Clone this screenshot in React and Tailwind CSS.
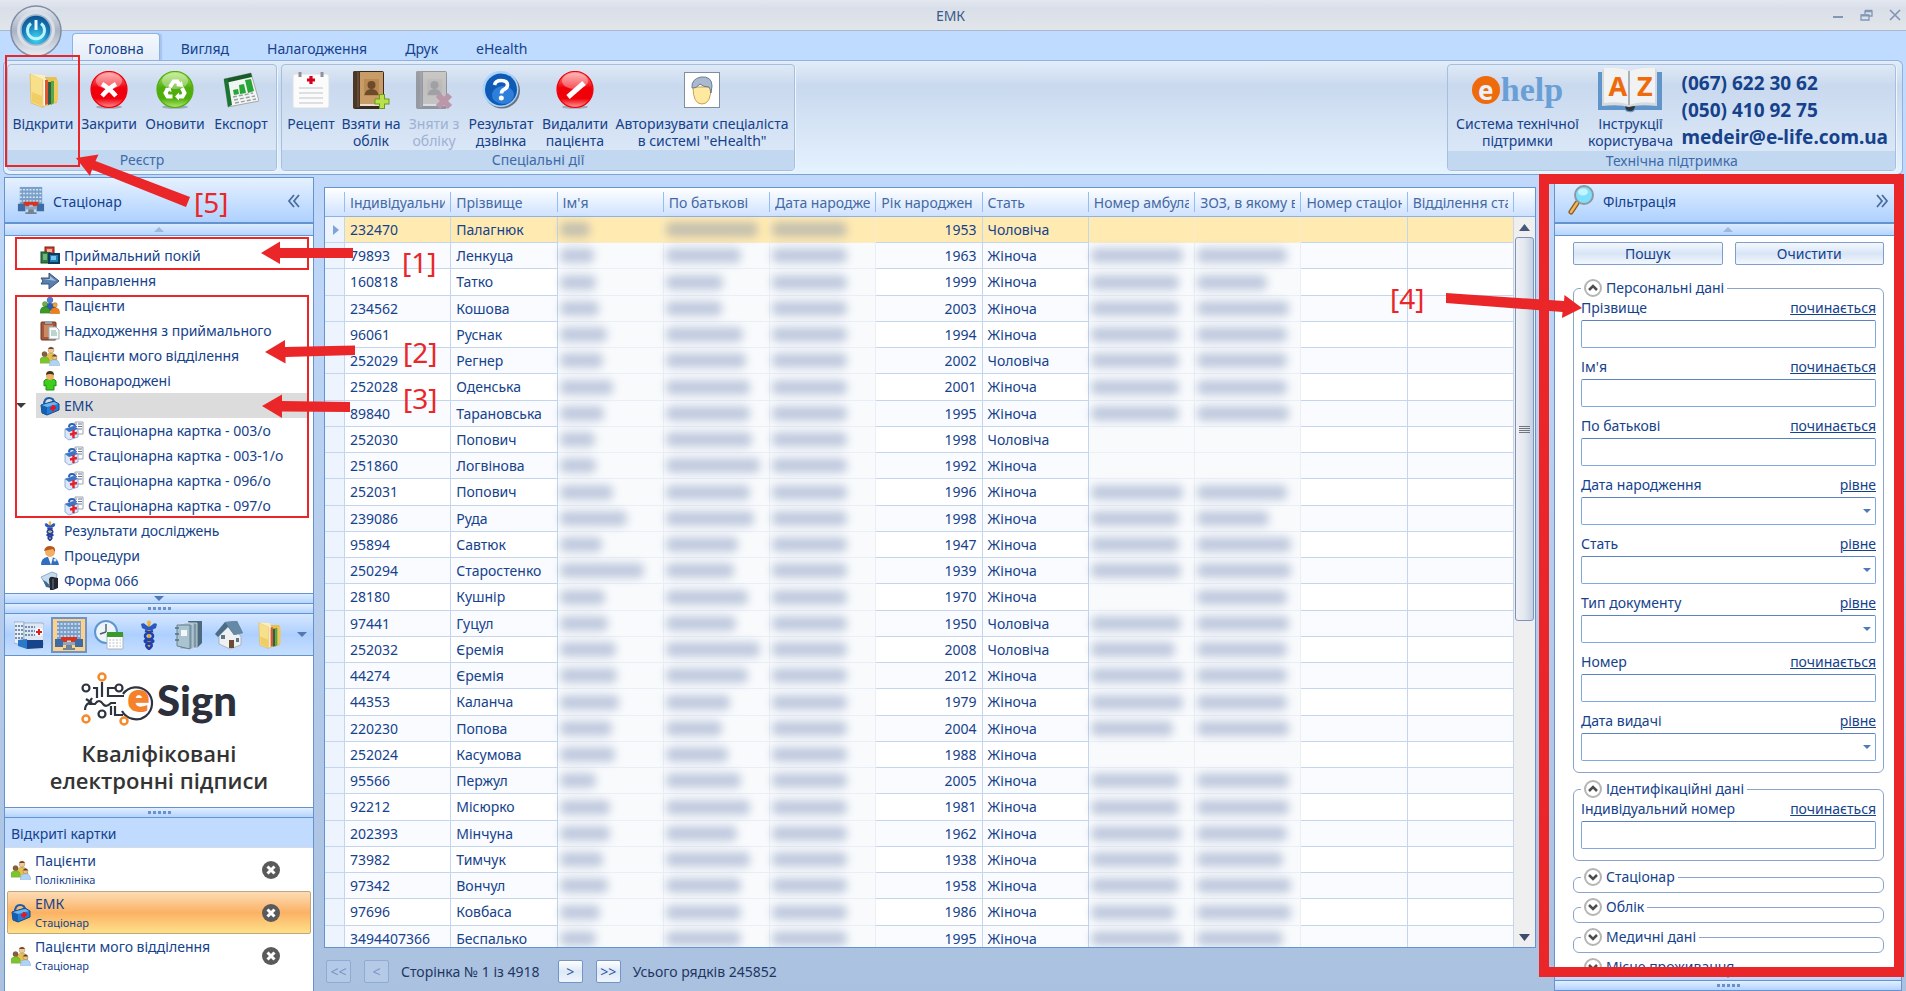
import { useState } from 'react'

/* ---------- icons ---------- */

function FolderIcon({ size }) {
  return (
    <svg width={size} height={size} viewBox="0 0 36 36" aria-hidden="true">
      <path d="M17 5 h13 q2 0 2 2 v24 l-15 4z" fill="#e9c04f" />
      <path d="M17 6 h4 v27 l-4 2z" fill="#fff" stroke="#aaa" strokeWidth="0.5" />
      <path d="M20 8 h3 v24 l-3 1z" fill="#e0562c" />
      <path d="M23 10 h3 v22 l-3 1z" fill="#2f5d45" />
      <path d="M26 9 h3 v22 l-3 2z" fill="#57a745" />
      <path d="M5 2 L18 7 L18 35.500 L6 31 Z" fill="#f8e08a" stroke="#d9b14a" strokeWidth="0.6" />
      <path d="M5 2 L20 3 L20 10 L17 7z" fill="#fbeeb8" />
      <path d="M7 20 L17 24 V34 L7 30z" fill="#edbf4f" opacity="0.6" />
      <path d="M29 8 h3 q1 0 1 2 v18 l-4 3z" fill="#edc95f" />
    </svg>
  )
}

function GlossCircle({ id, from, to, children }) {
  return (
    <svg width="38" height="38" viewBox="0 0 38 38" aria-hidden="true">
      <defs>
        <linearGradient id={id} x1="0" y1="0" x2="0" y2="1">
          <stop offset="0" stopColor={from} />
          <stop offset="0.45" stopColor={to} />
          <stop offset="0.75" stopColor={to} />
          <stop offset="1" stopColor={from} />
        </linearGradient>
      </defs>
      <ellipse cx="19" cy="36" rx="13" ry="1.8" fill="#7d8795" opacity="0.6" />
      <circle cx="19" cy="18.500" r="18" fill={`url(#${id})`} stroke={to} strokeWidth="1.2" />
      <ellipse cx="19" cy="10" rx="13" ry="8" fill="#fff" opacity="0.35" />
      {children}
    </svg>
  )
}

function CloseIcon() {
  return (
    <GlossCircle id="gRed" from="#ff8f8f" to="#f0000d">
      <path d="M12 13 q7 4 14 12 M26 13 q-7 4 -14 12" stroke="#fff" strokeWidth="4.500" fill="none" />
    </GlossCircle>
  )
}

function RefreshIcon() {
  return (
    <GlossCircle id="gGreen" from="#b5e86f" to="#4fae0c">
      <g fill="none" stroke="#fff" strokeWidth="4">
        <path d="M14 16 l3.500 -5.500 h4 l2 4" />
        <path d="M26 17 l2.500 5 l-2 3.500 h-5" />
        <path d="M16.500 25.500 h-5 l-2 -3.500 l2.500 -4.500" />
      </g>
      <path d="M20 15 l7 1 l-1 -6z M23 21.500 l-4 4 l4 4z M8.500 18 l6 -2 l1 5z" fill="#fff" />
    </GlossCircle>
  )
}

function NoEntryIcon() {
  return (
    <GlossCircle id="gRed2" from="#ff9c9c" to="#f00008">
      <path d="M12 26 L28 12" stroke="#fff" strokeWidth="5" />
    </GlossCircle>
  )
}

function HelpIcon() {
  return (
    <svg width="40" height="38" viewBox="0 0 40 38" aria-hidden="true">
      <circle cx="21" cy="19.500" r="18" fill="#6b7480" />
      <circle cx="19.500" cy="18" r="18" fill="#a9d4fb" />
      <circle cx="20" cy="18.500" r="16" fill="#0f5ab5" />
      <ellipse cx="22" cy="24" rx="11" ry="9" fill="#3c8ee8" opacity="0.7" />
      <path d="M13.500 14 q1 -4.500 6.500 -4.500 q6.500 0 6.500 4.500 q0 3 -3.500 4.500 q-2.500 1 -2.500 4" fill="none" stroke="#fff" strokeWidth="3.600" />
      <circle cx="20.300" cy="27" r="2.500" fill="#fff" />
    </svg>
  )
}

function ExportIcon() {
  return (
    <svg width="36" height="36" viewBox="0 0 36 36" aria-hidden="true">
      <path d="M1 7 L28 1 L36 29 L5 35 Z" fill="#f3f5f4" stroke="#a4aaa8" />
      <path d="M1 7 L28 1 L29 5 L2 11 Z" fill="#155c26" />
      <path d="M1 8 L5 7 L9 33 L5 35 Z" fill="#1b7431" />
      <path d="M10 18 l5 -1 l1 5 l-5 1z M16 13 l5 -1 l2 9 l-6 1z M22 8 l6 -1 l3 12 l-6 2z" fill="#27a636" />
      <path d="M10 25 l20 -4 M11 28 l21 -4 M12 31 l21 -4" stroke="#9aa1a0" strokeWidth="1.500" strokeDasharray="4 2" />
    </svg>
  )
}

function RecipeIcon() {
  return (
    <svg width="38" height="38" viewBox="0 0 38 38" aria-hidden="true">
      <rect x="1" y="3" width="36" height="34" rx="2" fill="#fbfbfc" stroke="#dcdfe4" />
      <path d="M8 1 v5 M30 1 v5" stroke="#8c919a" strokeWidth="3" />
      <path d="M19 5 v8 M15 9 h8" stroke="#d8001d" strokeWidth="3.200" />
      <path d="M7 17 h24 M7 22 h24 M7 27 h24 M7 32 h24" stroke="#d3d6dc" strokeWidth="1.500" />
    </svg>
  )
}

function BookIcon({ removed }) {
  return (
    <svg width="38" height="40" viewBox="0 0 38 40" aria-hidden="true" className={removed ? 'opacity-40 grayscale-[40%]' : ''}>
      <rect x="1" y="1" width="31" height="38" rx="2" fill="#3b2a20" />
      <path d="M8 36 h24 v-2 h-24z" fill="#e8e0cf" />
      <rect x="8" y="2" width="23" height="32" fill="#c79c66" />
      <rect x="1" y="1" width="7" height="37" rx="2" fill="#4d3727" />
      <path d="M6 2 v35" stroke="#7c6148" />
      <rect x="12" y="9" width="15" height="17" fill="#b98a53" />
      <circle cx="19.500" cy="15" r="4" fill="#6d4a2a" />
      <path d="M12.500 25 q1 -6 7 -6 q6 0 7 6z" fill="#6d4a2a" />
      {removed ? (
        <path d="M23 25 l12 12 M35 25 l-12 12" stroke="#d8213a" strokeWidth="6" />
      ) : (
        <g>
          <path d="M30 24 v15 M22.500 31.500 h15" stroke="#6d9a18" strokeWidth="6" />
          <path d="M30 25 v13 M23.500 31.500 h13" stroke="#b8e14c" strokeWidth="4" />
        </g>
      )}
    </svg>
  )
}

function DoctorCardIcon() {
  return (
    <svg width="36" height="36" viewBox="0 0 36 36" aria-hidden="true">
      <rect x="0.500" y="0.500" width="35" height="35" fill="#fff" stroke="#7e8ea3" />
      <path d="M9 15 q0 17 9 17 q9 0 9 -17z" fill="#ffe9a0" stroke="#caa14c" />
      <path d="M8 16 q-1 -9 9 -11 q11 -1 11 9 l-1 7 q-1 -5 -2 -6 q-6 0 -9 -3 q-4 5 -8 4z" fill="#a9b9cf" stroke="#6c7d96" />
    </svg>
  )
}

function BookAZIcon() {
  return (
    <svg width="66" height="46" viewBox="0 0 66 46" aria-hidden="true">
      <path d="M1 5 h64 v38 h-27 q-2 3 -6 2 q-3 0 -4 -2 h-27z" fill="#5f95cb" />
      <path d="M28 38 h10 q0 6 -5 6 q-5 0 -5 -6z" fill="#31363c" />
      <path d="M5 4 q0 -2 4 -3 q16 -1 23 4 q8 -6 24 -4 q4 1 4 3 v35 q-18 -2 -28 1 q-10 -3 -27 -1z" fill="#d5dadd" />
      <path d="M7 1 q16 -1 25 3 v34 q-9 -4 -25 -2z M58 1 q-16 -1 -25 3 v34 q9 -4 25 -2z" fill="#f0f2f4" />
      <path d="M32 4 v34" stroke="#a9b2b9" strokeWidth="2" />
    </svg>
  )
}

function HospitalIcon({ size }) {
  return (
    <svg width={size} height={size} viewBox="0 0 30 30" aria-hidden="true">
      <rect x="3" y="1" width="24" height="20" fill="#7aa0c9" />
      <path d="M3 4 h24 M3 8 h24 M3 12 h24 M3 16 h24" stroke="#dbe8f5" strokeWidth="1.500" strokeDasharray="2 1.500" />
      <path d="M1 19 h8 v8 h-8z M21 19 h8 v8 h-8z" fill="#3c6ca3" />
      <path d="M7 17 h16 v3 h-2 v2 h-4 v-2 h-4 v2 h-4 v-2 h-2z" fill="#d9331f" />
      <path d="M9 22 h12 v3 h-12z" fill="#8ea6bd" />
      <path d="M12 25 h6 v3 h3 v2 h-12 v-2 h3z" fill="#75828f" />
    </svg>
  )
}

function ClinicIcon() {
  return (
    <svg width="30" height="30" viewBox="0 0 30 30" aria-hidden="true">
      <path d="M0 2 h10 v24 l-10 -3z" fill="#e8eef5" stroke="#7b93b0" strokeWidth="0.600" />
      <path d="M10 3 h18 q2 0 2 2 v19 h-20z" fill="#dfe8f2" stroke="#7b93b0" strokeWidth="0.600" />
      <path d="M1 6 h8 M1 10 h8 M1 14 h8 M1 18 h8 M11 7 h10 M11 11 h10 M11 15 h10" stroke="#51729b" strokeWidth="1.600" strokeDasharray="2 1" />
      <circle cx="25" cy="12" r="4" fill="#fff" />
      <path d="M25 9 v6 M22 12 h6" stroke="#e02020" strokeWidth="2" />
      <path d="M13 20 h16 v8 l-16 1z" fill="#17448a" />
      <path d="M4 20 l9 -1 v10 l-9 -3z" fill="#2a78c8" />
    </svg>
  )
}

function ScheduleIcon() {
  return (
    <svg width="30" height="30" viewBox="0 0 30 30" aria-hidden="true">
      <circle cx="12" cy="12" r="11" fill="#eef4fa" stroke="#5b98cf" strokeWidth="2" />
      <path d="M12 12 V4 M12 12 L6 14" stroke="#4a5d70" strokeWidth="1.400" />
      <rect x="13" y="13" width="16" height="16" rx="1" fill="#fff" stroke="#a9b4bd" />
      <rect x="13" y="12" width="16" height="5" fill="#3a9a2b" />
      <path d="M15 20 h12 M15 23 h12 M15 26 h12" stroke="#b4bcc4" strokeDasharray="2 1.500" />
    </svg>
  )
}

function CaduceusIcon({ size }) {
  return (
    <svg width={size} height={size} viewBox="0 0 30 30" aria-hidden="true">
      <path d="M15 2 V29" stroke="#e4a523" strokeWidth="2.500" />
      <circle cx="15" cy="2.500" r="2" fill="#f1b52d" />
      <path d="M7 4 q3 -2 5 1 l3 2 l3 -2 q2 -3 5 -1 l-1 4 l-4 2 h-6 l-4 -2z" fill="#2b57c0" />
      <path d="M11 11 q8 2 8 5 t-6 4 t4 4 q2 2 -2 5 M19 11 q-8 2 -8 5 t6 4 t-4 4 q-2 2 2 5" stroke="#2140a8" strokeWidth="2.600" fill="none" />
    </svg>
  )
}

function BindersIcon() {
  return (
    <svg width="30" height="30" viewBox="0 0 30 30" aria-hidden="true">
      <path d="M14 1 h14 v22 l-5 5z" fill="#4c6a7d" />
      <path d="M10 3 h13 v25 h-13z" fill="#7c98a8" stroke="#dbe6ec" strokeWidth="0.800" />
      <path d="M6 4 h13 v25 h-13z" fill="#8faab9" stroke="#dbe6ec" strokeWidth="0.800" />
      <path d="M3 5 h13 v24 l-13 -3z" fill="#a9c3d1" stroke="#54717f" strokeWidth="0.800" />
      <path d="M7 10 h6 v6 h-6z" fill="#f3f7fa" />
      <path d="M1 8 h4 M1 14 h4 M1 20 h4" stroke="#5c6e78" strokeWidth="1.500" />
    </svg>
  )
}

function HouseIcon() {
  return (
    <svg width="30" height="30" viewBox="0 0 30 30" aria-hidden="true">
      <path d="M5 14 L12 5 L27 16 V25 L16 29 L5 24z" fill="#eef0f2" stroke="#9aa2aa" strokeWidth="0.700" />
      <path d="M1 14 L11 2 L23 1 L29 13 L20 15 L14 7 L4 17z" fill="#4b6c86" />
      <path d="M11 2 L23 1 L29 13 L20 15z" fill="#648aa7" />
      <path d="M15 20 h5 v8 l-5 0z" fill="#6b4a36" />
      <path d="M7 15 h4 v4 h-4z M22 18 h3 v4 h-3z" fill="#5f7485" />
    </svg>
  )
}

function CubesIcon() {
  return (
    <svg width="20" height="20" viewBox="0 0 20 20" aria-hidden="true">
      <rect x="5" y="1" width="9" height="10" fill="#d9432c" stroke="#7a1c12" />
      <rect x="1" y="6" width="9" height="11" fill="#2f7d43" stroke="#194a26" />
      <rect x="7" y="3" width="5" height="3" fill="#f5b6a8" />
      <rect x="3" y="8" width="4" height="6" fill="#6fb381" />
      <rect x="9" y="8" width="10" height="9" fill="#1f7fb8" stroke="#0d3a5d" strokeWidth="2" />
      <rect x="11" y="10" width="5" height="4" fill="#76c4ec" />
    </svg>
  )
}

function ArrowIcon() {
  return (
    <svg width="20" height="20" viewBox="0 0 20 20" aria-hidden="true">
      <path d="M1 7 H9 V2 L19 10 L9 18 V13 H1 L3 10z" fill="#5c80ae" stroke="#33527c" />
      <path d="M3 8 H10 V5 L16 10z" fill="#a4bfdf" />
    </svg>
  )
}

function Person({ x, y, head, body, r }) {
  return (
    <g>
      <path d={`M${x - r * 2} ${y + r * 3.6} q0 -${r * 2.6} ${r * 2} -${r * 2.6} q${r * 2} 0 ${r * 2} ${r * 2.6} z`} fill={body} stroke="#00000040" strokeWidth="0.500" />
      <circle cx={x} cy={y} r={r} fill={head} stroke="#00000050" strokeWidth="0.500" />
    </g>
  )
}

function PatientsIcon() {
  return (
    <svg width="20" height="20" viewBox="0 0 20 20" aria-hidden="true">
      <Person x={10} y={4} r={3} head="#4a7fd6" body="#2c5cb8" />
      <Person x={5} y={8} r={2.6} head="#63b548" body="#3c9a26" />
      <Person x={15} y={9} r={2.4} head="#f6a13b" body="#ee7f17" />
    </svg>
  )
}

function GroupIcon() {
  return (
    <svg width="20" height="20" viewBox="0 0 20 20" aria-hidden="true">
      <Person x={11} y={4} r={3} head="#f3c795" body="#e6c24b" />
      <path d="M8 3 q3 -4 6 0z" fill="#6b4a2b" />
      <Person x={4.5} y={8} r={2.6} head="#8a5f3b" body="#7cc62c" />
      <Person x={14.5} y={11} r={2.6} head="#f0c08c" body="#aed3f5" />
      <path d="M12 10.500 q2.500 -4 5 0z" fill="#54402f" />
    </svg>
  )
}

function ClipboardIcon() {
  return (
    <svg width="20" height="20" viewBox="0 0 20 20" aria-hidden="true">
      <rect x="1" y="1" width="15" height="18" rx="1" fill="#a5593a" stroke="#6d3520" />
      <rect x="4" y="4" width="9" height="12" fill="#c98a63" />
      <rect x="5" y="0" width="7" height="3" fill="#9aa3ad" />
      <path d="M9 6 h7 l3 3 v9 h-10z" fill="#f8fafb" stroke="#9fb0b8" />
      <path d="M11 10 h5 M11 12 h6 M11 14 h6" stroke="#7fb0a0" />
    </svg>
  )
}

function NewbornIcon() {
  return (
    <svg width="20" height="20" viewBox="0 0 20 20" aria-hidden="true">
      <path d="M6 19 v-5 l-2 1 v-5 q1 -2 4 -2 h4 q3 0 4 2 v5 l-2 -1 v5z" fill="#3fce1c" stroke="#1f8f0c" />
      <circle cx="10" cy="5" r="4" fill="#efb06c" />
      <path d="M6 4 q0 -4 4 -4 q4 0 4 4 q-4 -2 -8 0z" fill="#453422" />
    </svg>
  )
}

function BagIcon() {
  return (
    <svg width="20" height="20" viewBox="0 0 20 20" aria-hidden="true">
      <path d="M4 9 q0 -7 5 -7 q5 0 5 5" fill="none" stroke="#1d5ea8" strokeWidth="2" />
      <path d="M1 9 L14 5 L19 8 V14 L7 19 L2 17z" fill="#1e7fd8" stroke="#12488a" strokeLinejoin="round" />
      <path d="M1 9 L7 11 V19 L2 17z" fill="#155fae" />
      <path d="M2 9 L14 6 L18 8 L7 11z" fill="#6db4f0" />
      <path d="M13 9 v6 M10 12.500 l6 -1" stroke="#e8161f" strokeWidth="2.400" />
    </svg>
  )
}

function CardIcon() {
  return (
    <svg width="20" height="20" viewBox="0 0 20 20" aria-hidden="true">
      <path d="M11 1 h8 v12 h-8z" fill="#fff" stroke="#9aa3b3" />
      <path d="M12 3 h1 M14 3 h4 M12 5.500 h1 M14 5.500 h4 M12 8 h1 M14 8 h4" stroke="#68758c" />
      <path d="M5 6 q0 -3 3 -3 q3 0 3 3" fill="none" stroke="#2c62b6" strokeWidth="2" />
      <path d="M1 8 L10 5 L14 8 V16 L5 19 L1 16z" fill="#dbe8f9" stroke="#7fa0d2" strokeWidth="0.800" />
      <path d="M1 8 L10 5 L14 8 L5 11z" fill="#3d74c4" />
      <path d="M9.500 9 v8 M6 13.500 l7 -1.500" stroke="#e5202b" strokeWidth="2.400" />
    </svg>
  )
}

function MedicIcon() {
  return (
    <svg width="20" height="20" viewBox="0 0 20 20" aria-hidden="true">
      <path d="M1 19 q0 -7 6 -8 h5 q6 1 7 8z" fill="#2f6fbd" />
      <path d="M8 11 h5 l-2 8z" fill="#f6fafd" />
      <circle cx="10" cy="6" r="5" fill="#f0b062" />
      <path d="M4 5 q1 -5 6 -5 q6 0 5 6 l-2 -3 q-5 1 -9 2z" fill="#b8561c" />
      <circle cx="15" cy="14" r="1.500" fill="#d6e4f2" />
    </svg>
  )
}

function FormIcon() {
  return (
    <svg width="20" height="20" viewBox="0 0 20 20" aria-hidden="true">
      <path d="M1 6 L12 1 L17 3 L16 12 L6 14z" fill="#c5dcef" stroke="#8fadc6" />
      <path d="M3 9 q5 2 8 8 l-5 -1z" fill="#3e6a96" />
      <path d="M9 8 q1 -3 4 -2 l5 1 v10 l-5 2 h-3z" fill="#23282f" />
      <path d="M13 8 v10" stroke="#717b87" />
    </svg>
  )
}

function MagnifierIcon() {
  return (
    <svg width="28" height="32" viewBox="0 0 28 32" aria-hidden="true">
      <path d="M4 28 L10 19" stroke="#8a5a1d" strokeWidth="5" strokeLinecap="round" />
      <path d="M4 28 L10 19" stroke="#f0b75a" strokeWidth="2.500" strokeLinecap="round" />
      <circle cx="17" cy="11" r="9" fill="#7fe0fb" stroke="#8b98a3" strokeWidth="2" />
      <ellipse cx="16" cy="8" rx="5" ry="3.500" fill="#d8f7ff" opacity="0.8" />
    </svg>
  )
}

function RemoveIcon() {
  return (
    <svg width="20" height="20" viewBox="0 0 20 20" aria-hidden="true">
      <circle cx="10" cy="10" r="9" fill="#5a5a5a" />
      <path d="M6.500 6.500 l7 7 M13.500 6.500 l-7 7" stroke="#fff" strokeWidth="3" />
    </svg>
  )
}

function Orb() {
  return (
    <svg width="52" height="52" viewBox="0 0 52 52" aria-hidden="true">
      <defs>
        <linearGradient id="orbRim" x1="0" y1="0" x2="0" y2="1">
          <stop offset="0" stopColor="#e4e9f1" />
          <stop offset="0.500" stopColor="#a9b3c3" />
          <stop offset="1" stopColor="#e8edf3" />
        </linearGradient>
        <radialGradient id="orbCore" cx="0.500" cy="0.800" r="0.800">
          <stop offset="0" stopColor="#3fd9f2" />
          <stop offset="0.600" stopColor="#1678b8" />
          <stop offset="1" stopColor="#0c4f8c" />
        </radialGradient>
      </defs>
      <circle cx="26" cy="26" r="25" fill="url(#orbRim)" stroke="#7f8da6" strokeWidth="1.500" />
      <circle cx="26" cy="25" r="19" fill="#d9dfe7" />
      <circle cx="26" cy="25" r="15" fill="url(#orbCore)" stroke="#9db4cc" strokeWidth="1.500" />
      <path d="M21 18.500 a8.500 8.500 0 1 0 10 0" fill="none" stroke="#bff3fb" strokeWidth="3" />
      <path d="M26 15 v10" stroke="#e9fbff" strokeWidth="3" />
    </svg>
  )
}

function CircuitIcon() {
  return (
    <svg width="74" height="56" viewBox="0 0 74 56" aria-hidden="true">
      <g fill="none" stroke="#2e3340" strokeWidth="2.200">
        <circle cx="5" cy="16" r="3.500" />
        <circle cx="38" cy="16" r="3.500" />
        <circle cx="21" cy="42" r="3.500" />
        <path d="M12 16 h4 v10 M21 10 v15 M34 16 h-7 v8 h16" />
        <path d="M4 38 q0 -5 4 -7 l3 -5 M8 32 h6 q4 -6 8 0 q3 4 8 -1 h5 M30 34 v9 M34 34 v9 h8" />
        <path d="M42 22 a16 16 0 1 1 -1 17" />
        <path d="M5 27 l6 4" />
      </g>
      <g fill="none" stroke="#f58a2b" strokeWidth="2.500">
        <circle cx="21" cy="5" r="3.500" />
        <circle cx="5" cy="47" r="3.500" />
        <circle cx="43" cy="49" r="3.500" />
      </g>
    </svg>
  )
}

function Chevrons({ direction }) {
  return (
    <svg width="14" height="14" viewBox="0 0 14 14" fill="none" stroke="#4a6c9e" strokeWidth="1.800" aria-hidden="true">
      {direction === 'left' ? <path d="M7 1 L2 7 L7 13 M12 1 L7 7 L12 13" /> : <path d="M2 1 L7 7 L2 13 M7 1 L12 7 L7 13" />}
    </svg>
  )
}

function Triangle({ up, color }) {
  return (
    <svg width="10" height="5" viewBox="0 0 10 5" aria-hidden="true">
      <path d={up ? 'M0 5 L5 0 L10 5z' : 'M0 0 L10 0 L5 5z'} fill={color} />
    </svg>
  )
}

/* ---------- data ---------- */

const TABS = ['Головна', 'Вигляд', 'Налагодження', 'Друк', 'eHealth']

const TREE = [
  { label: 'Приймальний покій', icon: <CubesIcon /> },
  { label: 'Направлення', icon: <ArrowIcon /> },
  { label: 'Пацієнти', icon: <PatientsIcon /> },
  { label: 'Надходження з приймального', icon: <ClipboardIcon /> },
  { label: 'Пацієнти мого відділення', icon: <GroupIcon /> },
  { label: 'Новонароджені', icon: <NewbornIcon /> },
  { label: 'ЕМК', icon: <BagIcon />, open: true },
  { label: 'Стаціонарна картка - 003/о', icon: <CardIcon />, child: true },
  { label: 'Стаціонарна картка - 003-1/о', icon: <CardIcon />, child: true },
  { label: 'Стаціонарна картка - 096/о', icon: <CardIcon />, child: true },
  { label: 'Стаціонарна картка - 097/о', icon: <CardIcon />, child: true },
  { label: 'Результати досліджень', icon: <CaduceusIcon size={20} /> },
  { label: 'Процедури', icon: <MedicIcon /> },
  { label: 'Форма 066', icon: <FormIcon /> },
]

const CARDS = [
  { title: 'Пацієнти', sub: 'Поліклініка', icon: <GroupIcon /> },
  { title: 'ЕМК', sub: 'Стаціонар', icon: <BagIcon /> },
  { title: 'Пацієнти мого відділення', sub: 'Стаціонар', icon: <GroupIcon /> },
]

const COLUMNS = [
  'Індивідуальни',
  'Прізвище',
  "Ім'я",
  'По батькові',
  'Дата народже',
  'Рік народжен',
  'Стать',
  'Номер амбула',
  'ЗОЗ, в якому в',
  'Номер стаціон',
  'Відділення ста',
]

// id, surname, year, sex, widths of the hidden values
const ROWS = [
  ['232470', 'Палагнюк', 1953, 'Чоловіча', [30, 92, 75, 0, 0]],
  ['79893', 'Ленкуца', 1963, 'Жіноча', [34, 75, 75, 92, 90]],
  ['160818', 'Татко', 1999, 'Жіноча', [36, 57, 75, 88, 70]],
  ['234562', 'Кошова', 2003, 'Жіноча', [39, 56, 75, 88, 92]],
  ['96061', 'Руснак', 1994, 'Жіноча', [47, 77, 75, 88, 90]],
  ['252029', 'Регнер', 2002, 'Чоловіча', [43, 80, 75, 88, 90]],
  ['252028', 'Оденська', 2001, 'Жіноча', [53, 84, 75, 88, 90]],
  ['89840', 'Тарановська', 1995, 'Жіноча', [44, 84, 75, 88, 92]],
  ['252030', 'Попович', 1998, 'Чоловіча', [35, 86, 75, 0, 0]],
  ['251860', 'Логвінова', 1992, 'Жіноча', [36, 94, 75, 0, 0]],
  ['252031', 'Попович', 1996, 'Жіноча', [53, 84, 75, 92, 90]],
  ['239086', 'Руда', 1998, 'Жіноча', [67, 88, 75, 88, 72]],
  ['95894', 'Савтюк', 1947, 'Жіноча', [42, 72, 75, 88, 94]],
  ['250294', 'Старостенко', 1939, 'Жіноча', [84, 68, 75, 90, 94]],
  ['28180', 'Кушнір', 1970, 'Жіноча', [45, 82, 75, 0, 90]],
  ['97441', 'Гуцул', 1950, 'Чоловіча', [48, 70, 75, 90, 92]],
  ['252032', 'Єремія', 2008, 'Чоловіча', [56, 94, 75, 84, 90]],
  ['44274', 'Єремія', 2012, 'Жіноча', [57, 82, 75, 92, 90]],
  ['44353', 'Каланча', 1979, 'Жіноча', [59, 64, 75, 92, 90]],
  ['220230', 'Попова', 2004, 'Жіноча', [52, 56, 75, 82, 92]],
  ['252024', 'Касумова', 1988, 'Жіноча', [55, 62, 75, 0, 0]],
  ['95566', 'Пержул', 2005, 'Жіноча', [36, 75, 75, 88, 92]],
  ['92212', 'Місюрко', 1981, 'Жіноча', [50, 84, 75, 88, 92]],
  ['202393', 'Мінчуна', 1962, 'Жіноча', [50, 71, 75, 90, 90]],
  ['73982', 'Тимчук', 1938, 'Жіноча', [43, 84, 75, 88, 86]],
  ['97342', 'Вончул', 1958, 'Жіноча', [48, 75, 75, 88, 94]],
  ['97696', 'Ковбаса', 1986, 'Жіноча', [40, 75, 75, 84, 94]],
  ['3494407366', 'Беспалько', 1995, 'Жіноча', [36, 75, 75, 90, 86]],
]

const PERSONAL = [
  { label: 'Прізвище', mode: 'починається' },
  { label: "Ім'я", mode: 'починається' },
  { label: 'По батькові', mode: 'починається' },
  { label: 'Дата народження', mode: 'рівне', select: true },
  { label: 'Стать', mode: 'рівне', select: true },
  { label: 'Тип документу', mode: 'рівне', select: true },
  { label: 'Номер', mode: 'починається' },
  { label: 'Дата видачі', mode: 'рівне', select: true },
]

/* ---------- ribbon ---------- */

function RibbonGroup({ title, children }) {
  return (
    <section className="flex flex-col rounded-[4px] border border-[#a5bfdc] bg-gradient-to-b from-[#dfe9f6] via-[#c9d9ee] via-20% to-[#dfebfa] overflow-hidden shadow-[1px_1px_0_#eef5fd]">
      <div className="flex flex-1 px-[2px] pt-[5px]">{children}</div>
      <h2 className="h-5 bg-[#c1d8f0] text-center text-[14px] leading-[20px] text-[#3e6aaa]">{title}</h2>
    </section>
  )
}

function RibbonButton({ icon, label, width, disabled }) {
  return (
    <button type="button" disabled={disabled} className={`flex flex-col items-center ${width} ${disabled ? 'text-[#9db1d2]' : 'text-[#15428b]'}`}>
      <span className="flex h-10 items-center justify-center">{icon}</span>
      <span className="mt-[5px] whitespace-pre text-center text-[14px] leading-[17px]">{label}</span>
    </button>
  )
}

function Ribbon() {
  return (
    <div className="mx-[3px] flex h-[115px] items-stretch gap-1 rounded-[6px] border border-t-[#8db2e3] border-x-[#8db2e3] border-b-[#7fa3cf] bg-gradient-to-b from-[#e3edf9] via-[#c9d9ee] via-22% to-[#e5f2ff] py-[3px] pl-[3px] pr-[6px]">
      <RibbonGroup title="Реєстр">
        <RibbonButton width="w-[66px]" icon={<FolderIcon size={36} />} label="Відкрити" />
        <RibbonButton width="w-[66px]" icon={<CloseIcon />} label="Закрити" />
        <RibbonButton width="w-[66px]" icon={<RefreshIcon />} label="Оновити" />
        <RibbonButton width="w-[66px]" icon={<ExportIcon />} label="Експорт" />
      </RibbonGroup>
      <RibbonGroup title="Спеціальні дії">
        <RibbonButton width="w-[54px]" icon={<RecipeIcon />} label="Рецепт" />
        <RibbonButton width="w-[66px]" icon={<BookIcon />} label={'Взяти на\nоблік'} />
        <RibbonButton width="w-[60px]" icon={<BookIcon removed />} label={'Зняти з\nобліку'} disabled />
        <RibbonButton width="w-[74px]" icon={<HelpIcon />} label={'Результат\nдзвінка'} />
        <RibbonButton width="w-[74px]" icon={<NoEntryIcon />} label={'Видалити\nпацієнта'} />
        <RibbonButton width="w-[180px]" icon={<DoctorCardIcon />} label={'Авторизувати спеціаліста\nв системі "eHealth"'} />
      </RibbonGroup>
      <div className="flex-1" />
      <RibbonGroup title="Технічна підтримка">
        <RibbonButton
          width="w-[134px]"
          icon={
            <span className="flex items-center font-['Liberation_Serif'] text-[34px] font-bold leading-9 text-[#6a9fd6]">
              <span className="mr-px flex h-7 w-7 items-center justify-center rounded-full bg-[#ef6a0a] font-['Noto_Sans'] text-[26px] leading-7 text-[#eaf1fa]">
                e
              </span>
              help
            </span>
          }
          label={'Система технічної\nпідтримки'}
        />
        <RibbonButton
          width="w-[92px]"
          icon={
            <span className="relative">
              <BookAZIcon />
              <span className="absolute inset-x-0 top-0 flex justify-around px-[6px] font-['Noto_Sans'] text-[27px] font-bold leading-[38px] text-[#ef6a0a]">
                <span>A</span>
                <span>Z</span>
              </span>
            </span>
          }
          label={'Інструкції\nкористувача'}
        />
        <address className="px-[5px] text-[19px] font-bold not-italic leading-[27px] text-[#15428b]">
          (067) 622 30 62
          <br />
          (050) 410 92 75
          <br />
          medeir@e-life.com.ua
        </address>
      </RibbonGroup>
    </div>
  )
}

/* ---------- shared panel parts ---------- */

function PanelHeader({ icon, title, direction }) {
  return (
    <header className="flex h-[47px] shrink-0 items-center border-b-2 border-t border-[#6593cf] bg-gradient-to-b from-[#e6f1ff] to-[#aed1ff] pl-3 pr-3">
      <span className="flex w-7 justify-center">{icon}</span>
      <h2 className="ml-2 flex-1 pt-[2px] text-[14px]">{title}</h2>
      <button type="button" aria-label="Згорнути панель" className="pt-px">
        <Chevrons direction={direction} />
      </button>
    </header>
  )
}

function ScrollStrip({ up }) {
  return (
    <div
      className={`flex shrink-0 items-center justify-center border-[#6593cf] bg-gradient-to-b from-[#dcebff] to-[#b6d5ff] ${
        up ? 'h-3 border-b' : 'h-[11px] border-y'
      }`}
    >
      <Triangle up={up} color={up ? '#9bb8e0' : '#4f78b5'} />
    </div>
  )
}

function Grip() {
  return (
    <div className="flex h-[10px] shrink-0 items-center justify-center gap-[2px] border-b border-[#6593cf] bg-gradient-to-b from-[#e3efff] to-[#b3d3ff]">
      {[0, 1, 2, 3, 4].map((n) => (
        <span key={n} className="h-[3px] w-[3px] bg-[#6a92c8]" />
      ))}
    </div>
  )
}

/* ---------- left side ---------- */

function TreeItem({ item }) {
  return (
    <li className={`flex h-[25px] items-center ${item.child ? 'pl-[59px]' : 'pl-[11px]'}`}>
      {!item.child && (
        <span className="flex w-[20px] items-center">{item.open && <Triangle color="#3d3d3d" />}</span>
      )}
      <a
        href="#"
        className={`flex h-full items-center gap-1 ${item.child ? '' : 'flex-1 pl-1'} ${item.open ? 'mr-[6px] bg-[#dcdcdc]' : ''}`}
      >
        {item.icon}
        <span className="whitespace-nowrap text-[14px] leading-[25px]">{item.label}</span>
      </a>
    </li>
  )
}

function Sidebar() {
  const [active, setActive] = useState(1)
  const tools = [
    ['Поліклініка', <ClinicIcon />],
    ['Стаціонар', <HospitalIcon size={30} />],
    ['Розклад', <ScheduleIcon />],
    ['Дослідження', <CaduceusIcon size={30} />],
    ['Довідники', <BindersIcon />],
    ['Дім', <HouseIcon />],
    ['Документи', <FolderIcon size={28} />],
  ]

  return (
    <aside className="flex w-[310px] shrink-0 flex-col overflow-hidden border-x border-[#6593cf] bg-white">
      <PanelHeader icon={<HospitalIcon size={28} />} title="Стаціонар" direction="left" />
      <ScrollStrip up />
      <ul className="shrink-0 pt-[7px]">
        {TREE.map((item) => (
          <TreeItem key={item.label} item={item} />
        ))}
      </ul>
      <ScrollStrip />
      <Grip />
      <nav className="flex h-[42px] shrink-0 items-center border-b border-[#6593cf] bg-gradient-to-b from-[#d6e7ff] via-[#aecfff] to-[#c6dfff] pl-1">
        {tools.map(([name, icon], i) => (
          <button
            key={name}
            type="button"
            aria-label={name}
            className={`mx-[2px] flex h-9 w-9 items-center justify-center ${i === active ? 'border-2 border-[#6d94c4] bg-[#ffd08a]' : ''}`}
            onClick={() => setActive(i)}
          >
            {icon}
          </button>
        ))}
        <span className="ml-2">
          <Triangle color="#5178b0" />
        </span>
      </nav>
      <div className="flex h-[152px] shrink-0 flex-col items-center border-b border-[#6593cf] bg-white pt-3 text-[#333]">
        <div className="flex h-[64px] items-center">
          <span className="relative">
            <CircuitIcon />
            <span className="absolute right-0 top-0 flex h-[56px] w-[33px] items-center justify-center pb-[6px] font-['Open_Sans'] text-[38px] font-extrabold leading-9 text-[#f5822a]">
              e
            </span>
          </span>
          <span className="ml-[2px] font-['Lato'] text-[42px] font-black leading-[56px] text-[#2b303c]">Sign</span>
        </div>
        <p className="mt-2 text-center font-['Open_Sans'] text-[22px] font-semibold leading-[27px]">
          Кваліфіковані
          <br />
          електронні підписи
        </p>
      </div>
      <Grip />
      <h2 className="h-[30px] shrink-0 border-b border-[#d5dbe4] bg-[#c1dbff] pl-[6px] text-[14px] leading-[32px]">Відкриті картки</h2>
      <ul className="px-[2px]">
        {CARDS.map((card) => (
          <li
            key={card.title}
            className={`flex h-[43px] items-center rounded-[2px] border pl-[3px] pr-[29px] ${
              card.title === 'ЕМК'
                ? 'border-[#c2a67c] bg-gradient-to-b from-[#fcdcb4] via-[#fbb264] to-[#fee08a]'
                : 'border-transparent'
            }`}
          >
            {card.icon}
            <div className="ml-1 flex-1">
              <a href="#" className="block text-[14px] leading-[20px]">{card.title}</a>
              <p className="text-[11px] leading-[17px]">{card.sub}</p>
            </div>
            <button type="button" aria-label={`Закрити ${card.title}`}>
              <RemoveIcon />
            </button>
          </li>
        ))}
      </ul>
    </aside>
  )
}

/* ---------- table ---------- */

function HiddenCell({ width, selected }) {
  return (
    <td className={`border-b border-r pl-[2px] ${selected ? 'border-[#f8ecca]' : 'border-[#eaeff7] bg-[#f8fafc]'}`}>
      {width > 0 && <div className="h-[15px] rounded-md bg-[#5b76a8]/35 blur-[4px]" style={{ width }} />}
    </td>
  )
}

function DataTable() {
  const cell = 'truncate border-b border-r border-[#c4d6ee] px-[5px]'
  return (
    <div className="flex min-h-0 flex-1 border border-[#6593cf] bg-white">
      <div className="min-w-0 flex-1 overflow-hidden">
        <table className="w-full table-fixed border-separate border-spacing-0 text-[14px] leading-[20px]">
          <colgroup>
            <col className="w-[20px]" />
            {COLUMNS.map((name) => (
              <col key={name} />
            ))}
          </colgroup>
          <thead>
            <tr className="h-[29px] bg-gradient-to-b from-white to-[#cde1ff]">
              <th className="border-b border-[#8db2e3]">
                <div className="h-5 border-r border-[#93bdf3]" />
              </th>
              {COLUMNS.map((name) => (
                <th key={name} className="border-b border-[#8db2e3] text-left font-normal text-[#4469a3]">
                  <div className="h-5 border-r border-[#93bdf3] px-[5px]">
                    <div className="overflow-hidden whitespace-nowrap leading-[22px]">{name}</div>
                  </div>
                </th>
              ))}
            </tr>
          </thead>
          <tbody>
            {ROWS.map(([id, surname, year, sex, hidden], i) => {
              const selected = i === 0
              return (
                <tr
                  key={id}
                  className={`${i % 4 === 2 ? 'h-[27px]' : 'h-[26px]'} ${selected ? 'bg-[#ffeab2]' : i % 2 ? 'bg-[#f9fbff]' : 'bg-white'}`}
                >
                  <td className="border-b border-r border-[#c4d6ee] bg-[#edf4fe]">
                    {selected && (
                      <svg width="6" height="10" viewBox="0 0 6 10" className="ml-2" aria-hidden="true">
                        <path d="M0 0 L6 5 L0 10z" fill="#7fa5d8" />
                      </svg>
                    )}
                  </td>
                  <td className={cell}>{id}</td>
                  <td className={cell}>{surname}</td>
                  <HiddenCell width={hidden[0]} selected={selected} />
                  <HiddenCell width={hidden[1]} selected={selected} />
                  <HiddenCell width={hidden[2]} selected={selected} />
                  <td className={`${cell} text-right`}>{year}</td>
                  <td className={cell}>{sex}</td>
                  <HiddenCell width={hidden[3]} selected={selected} />
                  <HiddenCell width={hidden[4]} selected={selected} />
                  <td className={cell} />
                  <td className={cell} />
                </tr>
              )
            })}
          </tbody>
        </table>
      </div>
      <div className="flex w-[21px] flex-col items-center bg-[#efefef]">
        <div className="h-[29px] w-full border-b border-[#8db2e3] bg-gradient-to-b from-white to-[#cde1ff]" />
        <div className="flex h-5 items-center">
          <svg width="11" height="7" viewBox="0 0 11 7" aria-hidden="true">
            <path d="M0 7 L5.500 0 L11 7z" fill="#45567a" />
          </svg>
        </div>
        <div className="flex h-[384px] w-[19px] items-center justify-center rounded-[3px] border border-[#7f93b8] bg-gradient-to-r from-[#eef1f6] via-[#e3e8ef] to-[#c3d1e3]">
          <div className="flex flex-col gap-px">
            {[0, 1, 2, 3].map((n) => (
              <span key={n} className="h-px w-[11px] bg-[#707680]" />
            ))}
          </div>
        </div>
        <div className="flex flex-1 items-end pb-[6px]">
          <svg width="11" height="7" viewBox="0 0 11 7" aria-hidden="true">
            <path d="M0 0 L11 0 L5.500 7z" fill="#3c4b6e" />
          </svg>
        </div>
      </div>
    </div>
  )
}

function Pager() {
  const base = 'h-[23px] w-[25px] rounded-[2px] border text-[14px] leading-[20px]'
  const on = `${base} border-[#7494c4] bg-gradient-to-b from-white via-[#dde9f8] to-[#eef5fd] text-[#2c57a0]`
  const off = `${base} border-[#8fabd3] bg-[#b5cae6] text-[#7696c6]`
  return (
    <footer className="flex h-[43px] shrink-0 items-center pl-[2px] pt-1 text-[14px] text-[#1d3764]">
      <button type="button" disabled className={off}>&lt;&lt;</button>
      <button type="button" disabled className={`${off} ml-[13px]`}>&lt;</button>
      <span className="ml-3 mr-[18px]">Сторінка № 1 із 4918</span>
      <button type="button" className={on}>&gt;</button>
      <button type="button" className={`${on} ml-[13px]`}>&gt;&gt;</button>
      <span className="ml-3">Усього рядків 245852</span>
    </footer>
  )
}

/* ---------- filters ---------- */

function Field({ label, mode, select }) {
  const id = `f-${label}`
  const box = 'h-7 w-full rounded-[2px] border border-[#7fa9dd] border-t-[#5a83bf] bg-white px-1 text-[14px]'
  return (
    <div className="mb-[9px]">
      <div className="flex h-[22px] justify-between text-[14px] leading-[20px]">
        <label htmlFor={id}>{label}</label>
        <a href="#" className="underline">{mode}</a>
      </div>
      {select ? (
        <div className="relative">
          <select id={id} className={`${box} appearance-none`} defaultValue="">
            <option value=""></option>
          </select>
          <svg width="8" height="4" viewBox="0 0 8 4" className="pointer-events-none absolute right-[5px] top-3" aria-hidden="true">
            <path d="M0 0 H8 L4 4z" fill="#4f7ab8" />
          </svg>
        </div>
      ) : (
        <input id={id} type="text" className={box} />
      )}
    </div>
  )
}

function Section({ title, open, children }) {
  return (
    <fieldset className={`min-w-0 rounded-[6px] border border-[#8aa5c9] px-[7px] ${open ? 'mb-[6px] pb-[2px]' : 'h-[26px] mb-1'}`}>
      <legend className="flex h-[20px] items-center gap-1 px-[3px] text-[14px] leading-[20px]">
        <button type="button" aria-label={title} aria-expanded={!!open} className="flex h-[18px] w-[18px] items-center justify-center rounded-full border-2 border-[#b5b5b5]">
          <svg width="10" height="8" viewBox="0 0 10 8" fill="none" stroke="#4d4d4d" strokeWidth="2.500" aria-hidden="true">
            <path d={open ? 'M1 6 L5 2 L9 6' : 'M1 2 L5 6 L9 2'} />
          </svg>
        </button>
        {title}
      </legend>
      {children}
    </fieldset>
  )
}

function Filters() {
  const btn =
    'h-[23px] flex-1 rounded-[2px] border border-[#7f9fcb] bg-gradient-to-b from-[#f4f8fd] via-[#d8e5f6] to-[#f2f7fd] text-[14px] leading-[20px]'
  return (
    <aside className="relative flex w-[348px] shrink-0 flex-col border-x border-[#6593cf] bg-white">
      <PanelHeader icon={<MagnifierIcon />} title="Фільтрація" direction="right" />
      <ScrollStrip up />
      <form className="min-h-0 flex-1 overflow-hidden pl-[18px] pr-[17px] pt-[6px]">
        <div className="mb-[13px] flex gap-3">
          <button type="button" className={btn}>Пошук</button>
          <button type="reset" className={btn}>Очистити</button>
        </div>
        <Section title="Персональні дані" open>
          {PERSONAL.map((f) => (
            <Field key={f.label} {...f} />
          ))}
        </Section>
        <Section title="Ідентифікаційні дані" open>
          <Field label="Індивідуальний номер" mode="починається" />
        </Section>
        <Section title="Стаціонар" />
        <Section title="Облік" />
        <Section title="Медичні дані" />
        <Section title="Місце проживання" />
      </form>
      <ScrollStrip />
      <Grip />

      <div className="pointer-events-none absolute -left-4 -right-[3px] -top-[3px] bottom-[14px] border-[10px] border-[#ea2629]" />
      <svg width="136" height="30" viewBox="0 0 136 30" className="pointer-events-none absolute -left-[109px] top-[115px]" aria-hidden="true">
        <path d="M0 1 L118 9 L118.500 3 L136 16 L116 26 L116.500 20 L0 11z" fill="#ea2629" />
      </svg>
      <Mark place="-left-[165px] top-[101px]">[4]</Mark>
    </aside>
  )
}

/* ---------- marks over the window ---------- */

function Mark({ place, children }) {
  return <span className={`pointer-events-none absolute text-[28px] leading-[40px] text-[#ea2629] ${place}`}>{children}</span>
}

function Marks() {
  return (
    <div className="pointer-events-none absolute left-0 top-0">
      <svg width="370" height="530" viewBox="0 0 370 530" aria-hidden="true">
        <g fill="none" stroke="#ea2629" strokeWidth="2">
          <rect x="6" y="56" width="73" height="110" />
          <rect x="16" y="238" width="292" height="31" />
          <rect x="16" y="296" width="292" height="221" />
        </g>
        <g fill="#ea2629">
          <path d="M76 158 L98.500 154.500 L95.500 161 L190 197 L186 207 L92 169.500 L90 176z" />
          <path d="M261 253 L280 241.500 V248 H353 V258 H280 V264z" />
          <path d="M265 352 L285 340 V347 L355 345.500 V355 L285.500 357 V363.500z" />
          <path d="M262 406 L282 394.500 V401 L350 402 V412 L282 411.500 V418z" />
        </g>
      </svg>
      <Mark place="left-[194px] top-[182px]">[5]</Mark>
      <Mark place="left-[402px] top-[242px]">[1]</Mark>
      <Mark place="left-[403px] top-[332px]">[2]</Mark>
      <Mark place="left-[403px] top-[378px]">[3]</Mark>
    </div>
  )
}

/* ---------- window ---------- */

function TitleBar() {
  return (
    <header className="flex h-[31px] items-center border-b border-[#a9b9d0] bg-gradient-to-b from-[#e3e7f0] via-[#d9dfe9] via-30% to-[#e2e6ea]">
      <div className="flex-1" />
      <h1 className="text-[14px] text-[#3c5a87]">ЕМК</h1>
      <div className="flex flex-1 items-center justify-end gap-4 pr-[5px] text-[#8296b6]">
        <button type="button" aria-label="Згорнути">
          <svg width="12" height="12" viewBox="0 0 12 12" aria-hidden="true"><path d="M1 8 h10" stroke="currentColor" strokeWidth="2" /></svg>
        </button>
        <button type="button" aria-label="Відновити">
          <svg width="13" height="12" viewBox="0 0 13 12" fill="none" stroke="currentColor" aria-hidden="true">
            <path d="M5 5 V2 H12 V7 H9" strokeWidth="1.300" />
            <path d="M5 2 H12" strokeWidth="2.500" />
            <path d="M1 6 H9 V11 H1z" strokeWidth="1.300" />
            <path d="M1 6.500 H9" strokeWidth="2" />
          </svg>
        </button>
        <button type="button" aria-label="Закрити">
          <svg width="12" height="12" viewBox="0 0 12 12" aria-hidden="true"><path d="M1 1 L11 11 M11 1 L1 11" stroke="currentColor" strokeWidth="1.700" /></svg>
        </button>
      </div>
    </header>
  )
}

export default function App() {
  return (
    <div className="relative flex h-screen flex-col overflow-hidden bg-gradient-to-b from-[#c4ddff] to-[#abc1e0] font-['Noto_Sans',sans-serif] text-[#15428b]">
      <TitleBar />
      <nav className="flex h-[29px] items-end bg-[#bfdbff] pl-[72px]">
        {TABS.map((tab, i) => (
          <a
            key={tab}
            href="#"
            className={`flex h-[27px] items-center pt-[3px] text-[14px] ${
              i === 0
                ? 'mr-[2px] rounded-t-[4px] border border-b-0 border-[#8db2e3] bg-gradient-to-b from-[#f4f8fd] to-[#e3edf9] px-[15px] shadow-[2px_0_1px_#a5c4ee]'
                : 'px-[19px]'
            }`}
          >
            {tab}
          </a>
        ))}
      </nav>
      <Ribbon />
      <main className="flex min-h-0 flex-1 gap-[10px] px-1 pt-[2px]">
        <Sidebar />
        <div className="flex min-w-0 flex-1 flex-col pr-2 pt-[10px]">
          <DataTable />
          <Pager />
        </div>
        <Filters />
      </main>
      <button type="button" aria-label="Меню" className="absolute left-[10px] top-[5px]">
        <Orb />
      </button>
      <Marks />
    </div>
  )
}
